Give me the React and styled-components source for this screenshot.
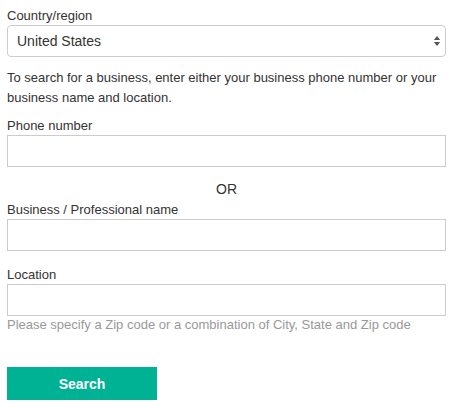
import React from "react";
import styled, { createGlobalStyle } from "styled-components";

const Global = createGlobalStyle`
  html, body { margin: 0; padding: 0; background: #fff; }
  body { font-family: "Liberation Sans", Arial, Helvetica, sans-serif; color: #333; }
  * { box-sizing: border-box; }
`;

const Form = styled.form`
  display: flex;
  flex-direction: column;
  padding: 6.5px 5px 0 7px;
  width: 451px;
`;

const Label = styled.label`
  display: block;
  font-size: 13px;
  line-height: 18px;
  color: #333;
  margin-top: ${(p) => p.$mt || 0}px;
  margin-bottom: 0.5px;
`;

const SelectBox = styled.div`
  position: relative;
  height: 32px;
  border: 1px solid #ccc;
  border-radius: 4px;
  background: #fff;
  display: flex;
  align-items: center;
  padding-left: 9px;
  font-size: 14px;
  color: #333;
`;

const Arrows = styled.svg`
  position: absolute;
  right: 4px;
  top: 9px;
`;

const Intro = styled.p`
  margin: 10.5px 0 0;
  font-size: 13px;
  line-height: 20px;
  color: #333;
`;

const Input = styled.input`
  display: block;
  width: 100%;
  height: 32px;
  border: 1px solid #ccc;
  border-radius: 0;
  background: #fff;
  padding: 0 8px;
  font: inherit;
  outline: none;
`;

const Or = styled.div`
  margin-top: 13px;
  text-align: center;
  font-size: 14px;
  line-height: 18px;
  color: #333;
`;

const Hint = styled.div`
  font-size: 13px;
  line-height: 18px;
  color: #999;
`;

const Button = styled.button`
  margin-top: 33px;
  width: 150px;
  height: 33px;
  border: none;
  border-radius: 0;
  background: #00b294;
  color: #fff;
  font-family: "Liberation Sans", Arial, sans-serif;
  font-weight: bold;
  font-size: 14px;
  padding: 0;
  cursor: pointer;
`;

export default function App() {
  return (
    <>
      <Global />
      <Form onSubmit={(e) => e.preventDefault()}>
        <Label>Country/region</Label>
        <SelectBox>
          United States
          <Arrows width="8" height="12" viewBox="0 0 8 12">
            <path d="M4 1 L7.2 5 L0.8 5 Z" fill="#555" />
            <path d="M4 11 L7.2 7 L0.8 7 Z" fill="#555" />
          </Arrows>
        </SelectBox>
        <Intro>
          To search for a business, enter either your business phone number or your business name and location.
        </Intro>
        <Label $mt={9}>Phone number</Label>
        <Input type="text" />
        <Or>OR</Or>
        <Label $mt={2.5}>Business / Professional name</Label>
        <Input type="text" />
        <Label $mt={14.5}>Location</Label>
        <Input type="text" />
        <Hint>Please specify a Zip code or a combination of City, State and Zip code</Hint>
        <Button type="submit">Search</Button>
      </Form>
    </>
  );
}
